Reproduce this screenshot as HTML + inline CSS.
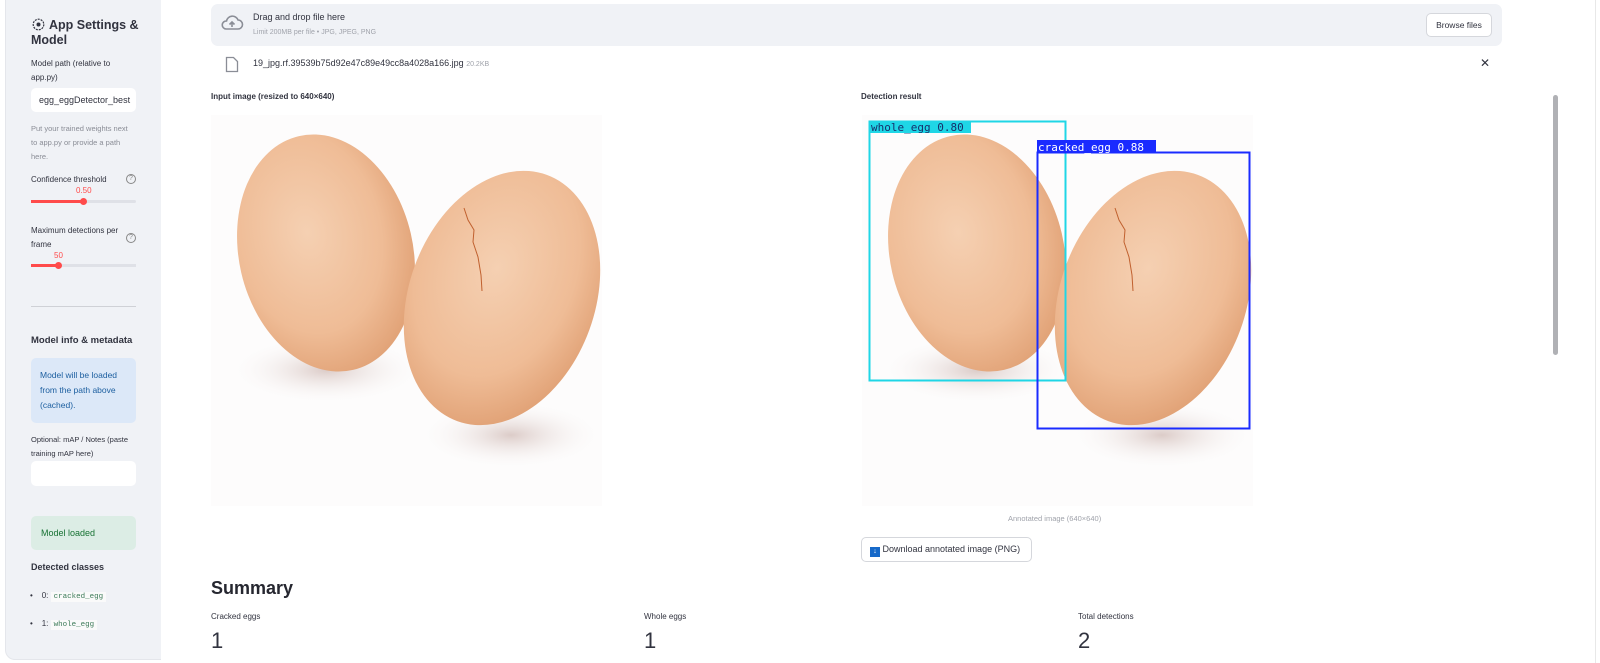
<!DOCTYPE html>
<html><head><meta charset="utf-8"><style>
*{box-sizing:border-box;margin:0;padding:0}
body{width:1600px;height:663px;overflow:hidden;background:#fff;font-family:"Liberation Sans",sans-serif;color:#31333f;position:relative}
.a{position:absolute}
.sb{left:5px;top:0;width:156px;height:660px;background:#f0f2f6;border-radius:0 0 0 10px;border-left:1px solid #e4e6eb;border-bottom:1px solid #e4e6eb}
.s{font-size:8px;color:#31333f;line-height:14px;white-space:nowrap}
.mono{font-family:"Liberation Mono",monospace;font-size:7.5px;color:#3b7a57;background:#fafafa;padding:1px 3px}
</style></head><body>
<div class="a sb"></div>
<svg class="a" style="left:32px;top:18px" width="13" height="13" viewBox="0 0 13 13"><circle cx="6.5" cy="6.5" r="5.3" fill="none" stroke="#31333f" stroke-width="1.2" stroke-dasharray="2 1"/><circle cx="6.5" cy="6.5" r="2" fill="#31333f"/></svg>
<div class="a" style="left:49px;top:17px;font-size:12.5px;font-weight:bold;line-height:16px">App Settings &amp;</div>
<div class="a" style="left:31px;top:33px;font-size:12.5px;font-weight:bold">Model</div>
<div class="a s" style="left:31px;top:57px">Model path (relative to<br>app.py)</div>
<div class="a" style="left:31px;top:88px;width:105px;height:24px;background:#fff;border-radius:5px;font-size:9px;line-height:24px;padding-left:8px;overflow:hidden;white-space:nowrap">egg_eggDetector_best</div>
<div class="a s" style="left:31px;top:122px;color:#8a8d96;font-size:7.5px">Put your trained weights next<br>to app.py or provide a path<br>here.</div>
<div class="a s" style="left:31px;top:173px">Confidence threshold</div>
<div class="a" style="left:126px;top:174px;width:10px;height:10px;border:1px solid #888;border-radius:50%;font-size:7px;text-align:center;line-height:8px;color:#888">?</div>
<div class="a" style="left:76px;top:186px;font-size:8px;color:#ff4b4b">0.50</div>
<div class="a" style="left:31px;top:200px;width:105px;height:3px;background:#dfe1e7;border-radius:2px"></div>
<div class="a" style="left:31px;top:200px;width:53px;height:3px;background:#ff4b4b"></div>
<div class="a" style="left:80px;top:198px;width:7px;height:7px;background:#ff4b4b;border-radius:50%"></div>
<div class="a s" style="left:31px;top:224px">Maximum detections per<br>frame</div>
<div class="a" style="left:126px;top:233px;width:10px;height:10px;border:1px solid #888;border-radius:50%;font-size:7px;text-align:center;line-height:8px;color:#888">?</div>
<div class="a" style="left:54px;top:251px;font-size:8px;color:#ff4b4b">50</div>
<div class="a" style="left:31px;top:264px;width:105px;height:3px;background:#dfe1e7"></div>
<div class="a" style="left:31px;top:264px;width:28px;height:3px;background:#ff4b4b"></div>
<div class="a" style="left:55px;top:262px;width:7px;height:7px;background:#ff4b4b;border-radius:50%"></div>
<div class="a" style="left:31px;top:306px;width:105px;height:1px;background:#cfd1d6"></div>
<div class="a" style="left:31px;top:335px;font-size:9.5px;font-weight:bold">Model info &amp; metadata</div>
<div class="a" style="left:31px;top:358px;width:105px;height:65px;background:#dce8f8;border-radius:5px;color:#1d5fa0;font-size:8.5px;line-height:15px;padding:10px 9px">Model will be loaded from the path above (cached).</div>
<div class="a s" style="left:31px;top:433px;font-size:7.5px;line-height:13.5px">Optional: mAP / Notes (paste<br>training mAP here)</div>
<div class="a" style="left:31px;top:461px;width:105px;height:25px;background:#fff;border-radius:5px"></div>
<div class="a" style="left:31px;top:516px;width:105px;height:34px;background:#dcede5;border-radius:5px;color:#177233;font-size:9px;line-height:34px;padding-left:10px">Model loaded</div>
<div class="a" style="left:31px;top:562px;font-size:9px;font-weight:bold">Detected classes</div>
<div class="a s" style="left:30px;top:589px">•&nbsp;&nbsp;&nbsp;&nbsp;0: <span class="mono">cracked_egg</span></div>
<div class="a s" style="left:30px;top:617px">•&nbsp;&nbsp;&nbsp;&nbsp;1: <span class="mono">whole_egg</span></div>

<div class="a" style="left:211px;top:4px;width:1291px;height:42px;background:#f0f2f6;border-radius:7px"></div>
<svg class="a" style="left:220px;top:14px" width="24" height="18" viewBox="0 0 24 18"><path d="M6 15h12a4.5 4.5 0 0 0 0-9 6 6 0 0 0-11.5 1A4 4 0 0 0 6 15z" fill="none" stroke="#8a8d96" stroke-width="1.6"/><path d="M12 13V8M9.5 10.5 12 8l2.5 2.5" fill="none" stroke="#8a8d96" stroke-width="1.6"/></svg>
<div class="a" style="left:253px;top:12px;font-size:9px">Drag and drop file here</div>
<div class="a" style="left:253px;top:29px;font-size:7px;color:#a0a3ab">Limit 200MB per file • JPG, JPEG, PNG</div>
<div class="a" style="left:1426px;top:13px;width:66px;height:24px;background:#fff;border:1px solid #d5d7dc;border-radius:5px;font-size:8.5px;text-align:center;line-height:22px">Browse files</div>
<svg class="a" style="left:225px;top:56px" width="14" height="17" viewBox="0 0 14 17"><path d="M1.5 1.5h7l4 4v10h-11z" fill="none" stroke="#8a8d96" stroke-width="1.3"/></svg>
<div class="a" style="left:253px;top:58px;font-size:9px">19_jpg.rf.39539b75d92e47c89e49cc8a4028a166.jpg <span style="font-size:7px;color:#a0a3ab">20.2KB</span></div>
<div class="a" style="left:1480px;top:56px;font-size:12px">✕</div>
<div class="a" style="left:211px;top:92px;font-size:8px;font-weight:bold">Input image (resized to 640×640)</div>
<div class="a" style="left:861px;top:92px;font-size:8px;font-weight:bold">Detection result</div>

<svg width="0" height="0" style="position:absolute"><defs>
<radialGradient id="g" cx="42%" cy="40%" r="65%"><stop offset="0" stop-color="#f5d0b2"/><stop offset=".65" stop-color="#efbc96"/><stop offset="1" stop-color="#e0a074"/></radialGradient>
<radialGradient id="sh" cx="50%" cy="50%" r="50%"><stop offset="0" stop-color="#d8c6c2" stop-opacity=".9"/><stop offset="1" stop-color="#fff" stop-opacity="0"/></radialGradient>
<g id="eggs"><rect width="391" height="391" fill="#fdfcfc"/>
<ellipse cx="115" cy="255" rx="100" ry="35" fill="url(#sh)"/>
<ellipse cx="300" cy="320" rx="95" ry="35" fill="url(#sh)"/>
<ellipse cx="115" cy="138" rx="87" ry="120" transform="rotate(-13 115 138)" fill="url(#g)"/>
<ellipse cx="291" cy="183" rx="93" ry="131" transform="rotate(20 291 183)" fill="url(#g)"/>
<path d="M253 93l4 12 6 10-1 12 5 15 3 18 1 16" fill="none" stroke="#c0602e" stroke-width="1"/>
</g></defs></svg>
<svg class="a" style="left:211px;top:115px" width="391" height="391"><use href="#eggs"/></svg>
<svg class="a" style="left:862px;top:115px" width="391" height="391"><use href="#eggs"/>
<rect x="7.5" y="6.5" width="196" height="259" fill="none" stroke="#1fd6e6" stroke-width="2"/>
<rect x="7" y="6" width="102" height="12" fill="#1fd6e6"/>
<text x="9" y="16" font-family="DejaVu Sans Mono,monospace" font-size="11" fill="#17306b">whole_egg 0.80</text>
<rect x="175.5" y="37.5" width="212" height="276" fill="none" stroke="#1a2bff" stroke-width="2"/>
<rect x="175" y="25" width="119" height="13" fill="#1a2bff"/>
<text x="176" y="36" font-family="DejaVu Sans Mono,monospace" font-size="11" fill="#fff">cracked_egg 0.88</text>
</svg>
<div class="a" style="left:1008px;top:514px;font-size:7.5px;color:#a0a3ab">Annotated image (640×640)</div>
<div class="a" style="left:861px;top:537px;width:171px;height:25px;border:1px solid #d5d7dc;border-radius:5px;font-size:9px;line-height:23px;padding-left:8px;white-space:nowrap"><span style="display:inline-block;width:10px;height:10px;background:#1669c9;color:#fff;font-size:7px;text-align:center;line-height:10px;vertical-align:-1px">↓</span> Download annotated image (PNG)</div>
<div class="a" style="left:211px;top:578px;font-size:18px;font-weight:bold;color:#262730">Summary</div>
<div class="a" style="left:211px;top:612px;font-size:8px">Cracked eggs</div>
<div class="a" style="left:644px;top:612px;font-size:8px">Whole eggs</div>
<div class="a" style="left:1078px;top:612px;font-size:8px">Total detections</div>
<div class="a" style="left:211px;top:628px;font-size:22px">1</div>
<div class="a" style="left:644px;top:628px;font-size:22px">1</div>
<div class="a" style="left:1078px;top:628px;font-size:22px">2</div>
<div class="a" style="left:1553px;top:95px;width:5px;height:260px;background:#b0b1b5;border-radius:3px"></div>
<div class="a" style="left:1595px;top:0;width:1px;height:663px;background:#e8e8e8"></div>
</body></html>
